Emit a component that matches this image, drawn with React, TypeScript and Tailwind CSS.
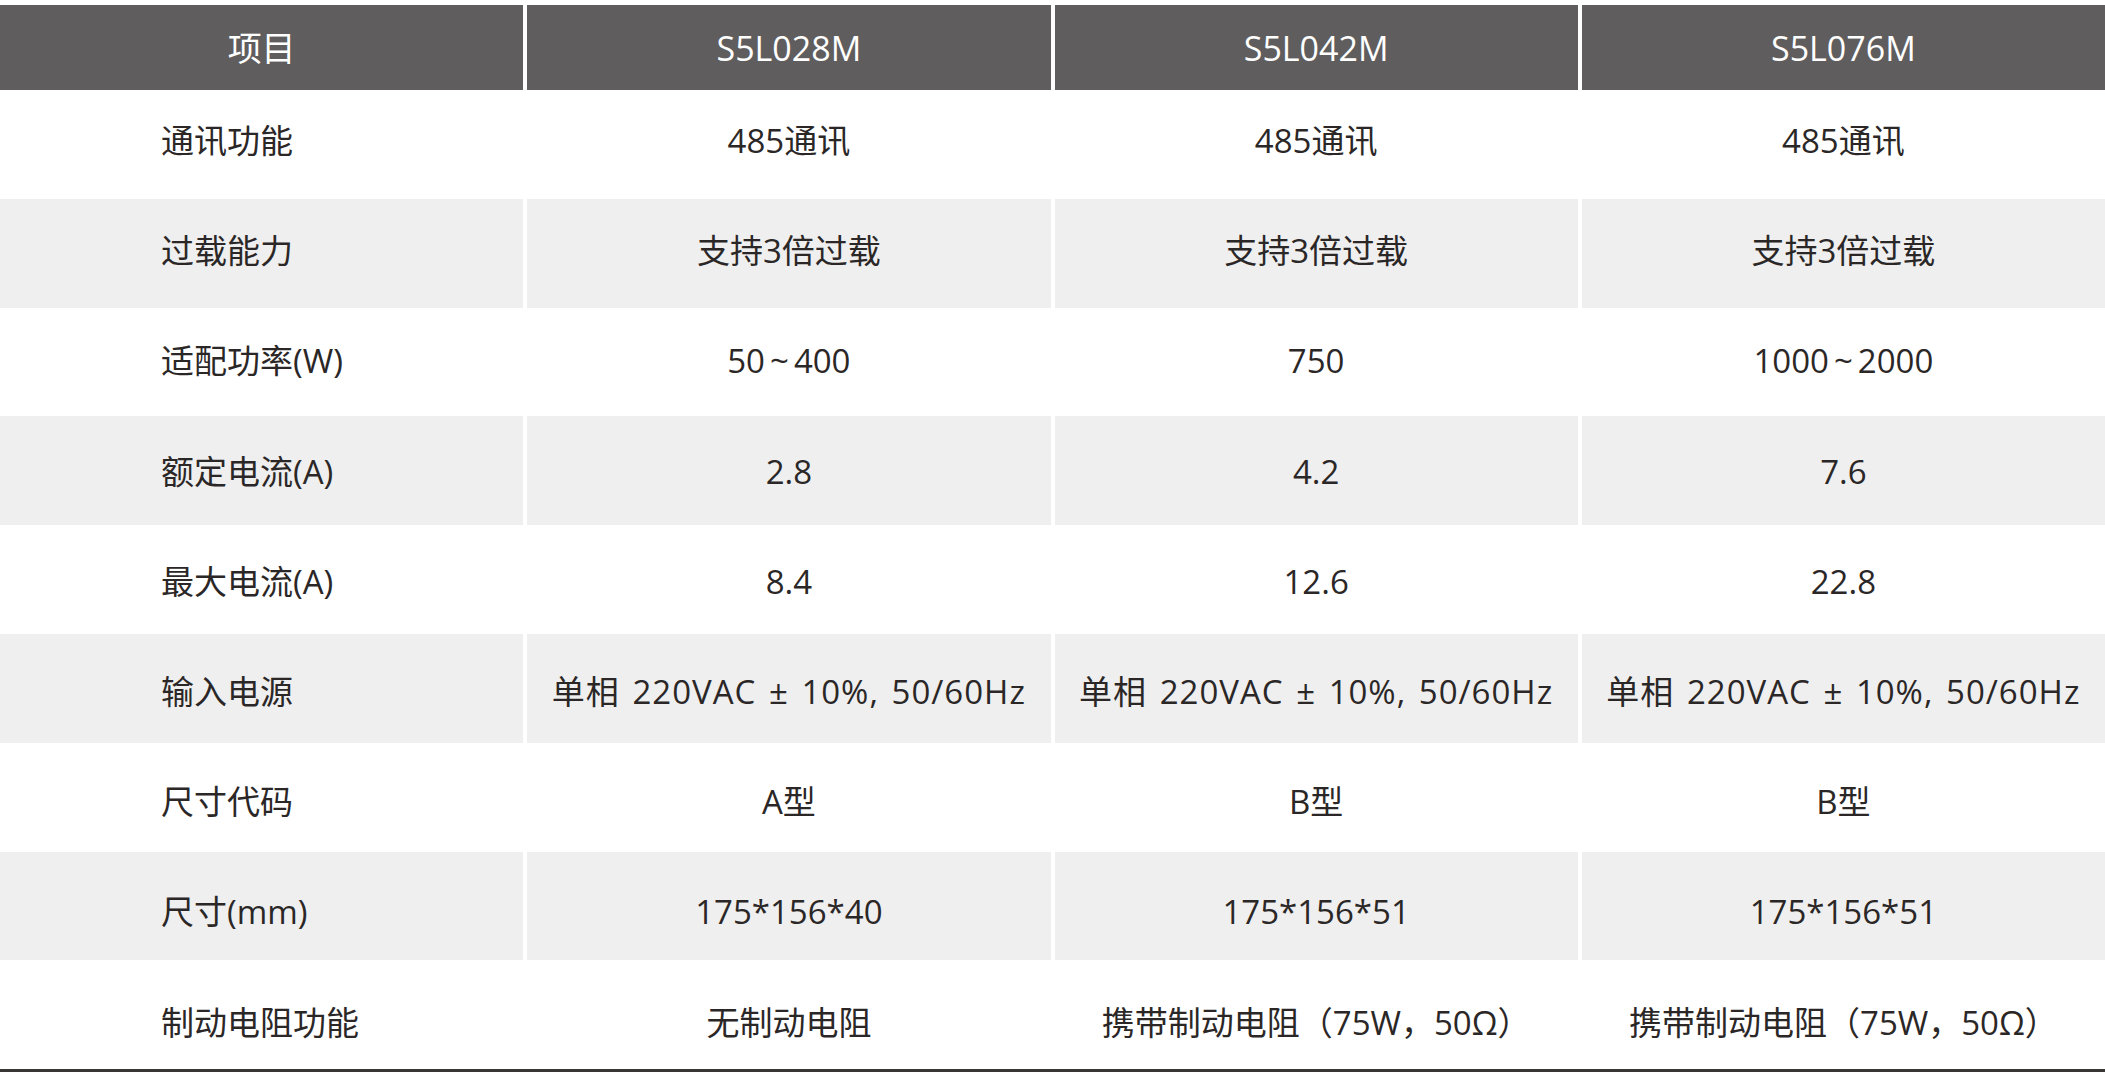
const headers = ['项目', 'S5L028M', 'S5L042M', 'S5L076M']

const rows: string[][] = [
  ['通讯功能', '485通讯', '485通讯', '485通讯'],
  ['过载能力', '支持3倍过载', '支持3倍过载', '支持3倍过载'],
  ['适配功率(W)', '50~400', '750', '1000~2000'],
  ['额定电流(A)', '2.8', '4.2', '7.6'],
  ['最大电流(A)', '8.4', '12.6', '22.8'],
  ['输入电源', '单相 220VAC ± 10%, 50/60Hz', '单相 220VAC ± 10%, 50/60Hz', '单相 220VAC ± 10%, 50/60Hz'],
  ['尺寸代码', 'A型', 'B型', 'B型'],
  ['尺寸(mm)', '175*156*40', '175*156*51', '175*156*51'],
  ['制动电阻功能', '无制动电阻', '携带制动电阻（75W，50Ω）', '携带制动电阻（75W，50Ω）'],
]

// text drifts a little lower row by row in the source
const rowPad = ['pb-[8px]', 'pb-[5px]', 'pb-[2px]', 'pt-[1px]', 'pt-[3px]', 'pt-[6px]', 'pt-[9px]', 'pt-[12px]', 'pt-[15px]']

// the tilde in the source is drawn wider than Open Sans gives it
function Cell({ text }: { text: string }) {
  if (!text.includes('~')) return <>{text}</>
  const [a, b] = text.split('~')
  return (
    <>
      {a}
      <span className="mx-[5px]">~</span>
      {b}
    </>
  )
}

export default function App() {
  return (
    <div
      className="w-[2105px] h-[1072px] bg-white pt-[5px] overflow-hidden"
      style={{ fontFamily: '"Open Sans", "Noto Sans CJK SC", sans-serif' }}
    >
      {/* Header */}
      <div className="grid grid-cols-4 gap-x-[4px] h-[85px]">
        {headers.map((h) => (
          <div key={h} className="bg-[#5f5d5e] flex items-center justify-center text-white text-[34px] leading-none">
            {h}
          </div>
        ))}
      </div>

      {/* Body */}
      {rows.map((row, i) => (
        <div key={row[0]} className="grid grid-cols-4 gap-x-[4px] h-[108.8px]">
          {row.map((cell, j) => (
            <div
              key={j}
              className={
                (i % 2 === 1 ? 'bg-[#efefef] ' : 'bg-white ') +
                (j === 0 ? 'justify-start pl-[161px] ' : 'justify-center ') +
                (i === 5 && j > 0 ? 'tracking-[1px] [word-spacing:3px] ' : '') +
                rowPad[i] +
                ' flex items-center text-[33px] leading-none text-[#2b2727] whitespace-nowrap'
              }
            >
              <Cell text={cell} />
            </div>
          ))}
        </div>
      ))}

      <div className="h-[3px] bg-[#3a3535]" />
    </div>
  )
}
